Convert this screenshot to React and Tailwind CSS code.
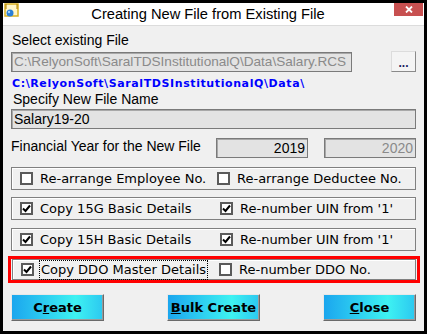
import React from "react";

const sans = { fontFamily: '"Liberation Sans", Arial, sans-serif' };
const dv = { fontFamily: '"DejaVu Sans", Verdana, sans-serif' };

function Box({ checked }) {
  return (
    <span className="w-[13px] h-[13px] border-2 border-[#5a5a5a] bg-white flex items-center justify-center shrink-0">
      {checked && (
        <svg width="9" height="9" viewBox="0 0 9 9">
          <path d="M1 4.5 L3.5 7 L8 1.5" fill="none" stroke="#000" strokeWidth="2" />
        </svg>
      )}
    </span>
  );
}

function Check({ checked, label, focus }) {
  return (
    <div className="flex items-center gap-[6px]">
      <Box checked={checked} />
      <span
        className={"text-[13px] leading-[18px] text-black px-[1px] " + (focus ? "outline outline-1 outline-dotted outline-black" : "")}
        style={dv}
      >
        {label}
      </span>
    </div>
  );
}

function Group({ a, b, col, className = "" }) {
  return (
    <div className={"border border-[#808080] shadow-[inset_1px_1px_0_#fff] flex items-center pl-[8px] " + className}>
      <div style={{ width: col }} className="shrink-0">
        <Check {...a} />
      </div>
      <Check {...b} />
    </div>
  );
}

function Btn({ children }) {
  return (
    <button
      className="w-[93px] h-[27px] border border-t-[#e8e8e8] border-l-[#e8e8e8] border-r-[#6a6a6a] border-b-[#6a6a6a] shadow-[inset_-1px_-1px_0_#9a9a9a] bg-[linear-gradient(90deg,#1ba6ee,#3ef2f2_70%,#2cc8f0)] text-[13px] font-bold text-black flex items-center justify-center"
      style={dv}
    >
      {children}
    </button>
  );
}

export default function App() {
  return (
    <div className="w-[427px] h-[334px] bg-black pt-[3px] px-[3px] pb-[3px]" style={sans}>
      <div className="h-[328px] bg-[#f0f0f0] flex flex-col">
        <div className="h-[23px] bg-white border-b border-[#dcdcdc] flex items-start relative">
          <svg className="ml-[1px]" width="16" height="15" viewBox="0 0 16 15">
            <rect x="1" y="1" width="13" height="12" fill="#fff6c8" stroke="#d8b020" strokeWidth="1.5" />
            <path d="M2 1 L2 6 M13 1 L13 6" stroke="#b08000" strokeWidth="1" />
            <circle cx="6" cy="10" r="3.5" fill="#2a7fd6" />
            <circle cx="5" cy="9" r="1.2" fill="#9fd0ff" />
          </svg>
          <div className="flex-1 text-center text-[14.7px] leading-[20px] text-black mt-[1px] pl-[2px]">
            Creating New File from Existing File
          </div>
          <div className="w-[29px] h-[13px] bg-[#c75050] mr-[1px] flex items-center justify-center">
            <svg width="8" height="7" viewBox="0 0 8 7">
              <path d="M1 0.5 L7 6.5 M7 0.5 L1 6.5" stroke="#fff" strokeWidth="1.8" />
            </svg>
          </div>
        </div>

        <div className="px-[8px] flex flex-col">
          <div className="mt-[6px] text-[14px] leading-[16px] text-black pl-[1px]">Select existing File</div>

          <div className="mt-[3px] flex items-start h-[21px]">
            <div className="mt-[1px] w-[341px] h-[20px] bg-[#e3e3e3] border border-[#7a7a7a] shadow-[inset_1px_1px_0_#a8a8a8] text-[13.6px] leading-[18px] text-[#8a8a8a] pl-[2px] whitespace-nowrap">
              C:\RelyonSoft\SaralTDSInstitutionalQ\Data\Salary.RCS
            </div>
            <div className="ml-auto w-[25px] h-[21px] bg-[#f4f4f4] border border-t-[#dcdcdc] border-l-[#dcdcdc] border-r-[#8a8a8a] border-b-[#8a8a8a] flex items-end justify-center pb-[4px]">
              <span className="text-[12px] leading-[8px] font-bold text-[#1a1a60]">...</span>
            </div>
          </div>

          <div className="mt-[5px] text-[11px] leading-[13px] font-bold text-[#0000ff] pl-[1px] tracking-[0.6px] whitespace-nowrap" style={dv}>
            C:\RelyonSoft\SaralTDSInstitutionalQ\Data\
          </div>

          <div className="mt-[1px] text-[14px] leading-[16px] text-black pl-[2px]">Specify New File Name</div>

          <div className="mt-[2px] h-[20px] bg-[#e3e3e3] border border-[#7a7a7a] shadow-[inset_1px_1px_0_#a8a8a8] text-[14px] leading-[18px] text-black pl-[2px]">
            Salary19-20
          </div>

          <div className="mt-[9px] flex items-start h-[20px]">
            <div className="w-[205px] text-[14px] leading-[16px] text-black">Financial Year for the New File</div>
            <div className="w-[92px] h-[20px] bg-[#e3e3e3] border border-[#7a7a7a] shadow-[inset_1px_1px_0_#a8a8a8] text-[14px] leading-[18px] text-black text-right pr-[2px]">
              2019
            </div>
            <div className="ml-auto w-[92px] h-[20px] bg-[#e3e3e3] border border-[#7a7a7a] shadow-[inset_1px_1px_0_#a8a8a8] text-[14px] leading-[18px] text-[#8a8a8a] text-right pr-[2px]">
              2020
            </div>
          </div>

          <Group
            className="mt-[9px] h-[23px]"
            col={197}
            a={{ checked: false, label: "Re-arrange Employee No." }}
            b={{ checked: false, label: "Re-arrange Deductee No." }}
          />
          <Group
            className="mt-[7px] h-[23px]"
            col={200}
            a={{ checked: true, label: "Copy 15G Basic Details" }}
            b={{ checked: true, label: "Re-number UIN from '1'" }}
          />
          <Group
            className="mt-[8px] h-[23px]"
            col={200}
            a={{ checked: true, label: "Copy 15H Basic Details" }}
            b={{ checked: true, label: "Re-number UIN from '1'" }}
          />

          <div className="mt-[5px] -ml-[3px] w-[412px] h-[27px] border-[3px] border-[#ff0000] px-[1px]">
            <Group
              className="h-full"
              col={198}
              a={{ checked: true, label: "Copy DDO Master Details", focus: true }}
              b={{ checked: false, label: "Re-number DDO No." }}
            />
          </div>

          <div className="mt-[11px] flex justify-between">
            <Btn>
              C<span className="underline">r</span>eate
            </Btn>
            <Btn>
              <span className="underline">B</span>ulk Create
            </Btn>
            <Btn>
              <span className="underline">C</span>lose
            </Btn>
          </div>
        </div>
      </div>
    </div>
  );
}
